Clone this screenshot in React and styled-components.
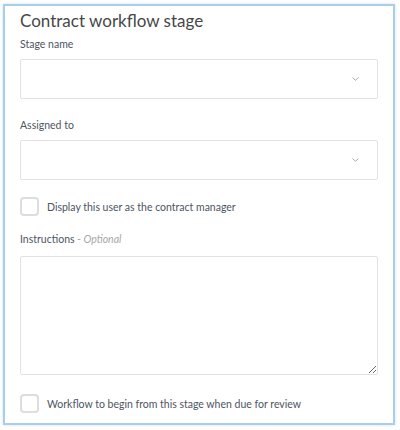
import React from "react";
import styled, { createGlobalStyle } from "styled-components";

const Global = createGlobalStyle`
  html, body { margin: 0; padding: 0; background: #ffffff; }
  body { font-family: Lato, "Open Sans", sans-serif; }
  * { box-sizing: border-box; }
`;

const Page = styled.div`
  width: 400px;
  height: 430px;
  padding: 4px 5px 4px 3px;
  background: #ffffff;
`;

const Panel = styled.section`
  border: 2px solid #a9cfe8;
  box-shadow: 0 0 3px rgba(120, 170, 210, 0.35);
  background: #ffffff;
  padding: 4px 15px 10px 15px;
  display: flex;
  flex-direction: column;
`;

const Title = styled.h2`
  margin: 0;
  font-size: 17px;
  line-height: 22px;
  font-weight: 400;
  color: #474747;
`;

const Field = styled.div`
  display: flex;
  flex-direction: column;
  margin-top: ${(p) => p.$top}px;
`;

const Label = styled.label`
  font-size: 10.5px;
  line-height: 16px;
  color: #4d5561;
  margin-bottom: ${(p) => p.$gap}px;
`;

const Optional = styled.span`
  font-style: italic;
  color: #a8a8a8;
`;

const SelectBox = styled.div`
  position: relative;
  height: 40px;
  border: 1px solid #e2e2e2;
  border-radius: 2px;
  background: #ffffff;
`;

const Chevron = styled.svg`
  position: absolute;
  right: 18px;
  top: 50%;
  margin-top: -2px;
`;

const TextArea = styled.textarea`
  height: 119px;
  border: 1px solid #e2e2e2;
  border-radius: 2px;
  resize: vertical;
  font-family: inherit;
  outline: none;
`;

const CheckRow = styled.label`
  display: flex;
  align-items: center;
  gap: 8px;
  margin-top: ${(p) => p.$top}px;
  font-size: 10.5px;
  color: #4d5561;
`;

const Box = styled.span`
  width: 19px;
  height: 19px;
  border: 2px solid #dddddd;
  border-radius: 4px;
  background: #ffffff;
  flex-shrink: 0;
`;

const Select = () => (
  <SelectBox>
    <Chevron width="7" height="4" viewBox="0 0 7 4">
      <path d="M0.5 0.5 L3.5 3.3 L6.5 0.5" fill="none" stroke="#a9a9a9" strokeWidth="1" />
    </Chevron>
  </SelectBox>
);

export default function App() {
  return (
    <Page>
      <Global />
      <Panel>
        <Title>Contract workflow stage</Title>
        <Field $top={4}>
          <Label $gap={7}>Stage name</Label>
          <Select />
        </Field>
        <Field $top={18}>
          <Label $gap={7}>Assigned to</Label>
          <Select />
        </Field>
        <CheckRow $top={17}>
          <Box />
          Display this user as the contract manager
        </CheckRow>
        <Field $top={15}>
          <Label $gap={9}>
            Instructions <Optional>- Optional</Optional>
          </Label>
          <TextArea />
        </Field>
        <CheckRow $top={19}>
          <Box />
          Workflow to begin from this stage when due for review
        </CheckRow>
      </Panel>
    </Page>
  );
}
